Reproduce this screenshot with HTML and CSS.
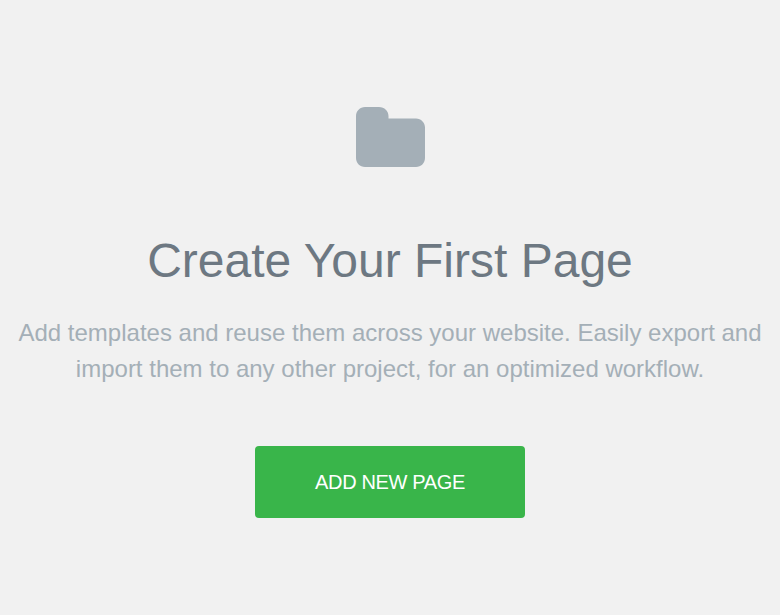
FILE: index.html
```html
<html>
    <head>
        <link rel="stylesheet" href="styles.css">
    </head>
    <body>
        <div class="empty">
            <svg class="icon" width="69" height="60" viewBox="0 0 69 60">
                <path fill="#a4afb7" d="M9 0H23C28.500 0 32.500 4 32.500 9V11.500H60C65 11.500 69 15.500 69 20.500V51C69 56 65 60 60 60H9C4 60 0 56 0 51V9C0 4 4 0 9 0Z"/>
            </svg>
            <h1 class="title">Create Your First Page</h1>
            <p class="text">Add templates and reuse them across your website. Easily export and import them to any other project, for an optimized workflow.</p>
            <button class="submit">ADD NEW PAGE</button>
        </div>
    </body>
</html>
```

FILE: styles.css
```css
html{
    background-color: #f1f1f1;
}
body{
    margin: 0;
    font-family: "Liberation Sans", Arial, sans-serif;
}
.empty{
    display: flex;
    flex-direction: column;
    align-items: center;
    padding-top: 107px;
    text-align: center;
}
.icon{
    display: block;
}
.title{
    margin: 0;
    margin-top: 64px;
    font-size: 48px;
    line-height: 60px;
    font-weight: normal;
    color: #6d7882;
}
.text{
    margin: 0;
    margin-top: 24px;
    width: 760px;
    font-size: 24px;
    line-height: 36px;
    color: #a4afb7;
}
.submit{
    margin-top: 59px;
    width: 270px;
    height: 72px;
    font-family: inherit;
    font-size: 20px;
    letter-spacing: -0.35px;
    color: white;
    background-color: #39b54a;
    border: none;
    border-radius: 4px;
}
```
